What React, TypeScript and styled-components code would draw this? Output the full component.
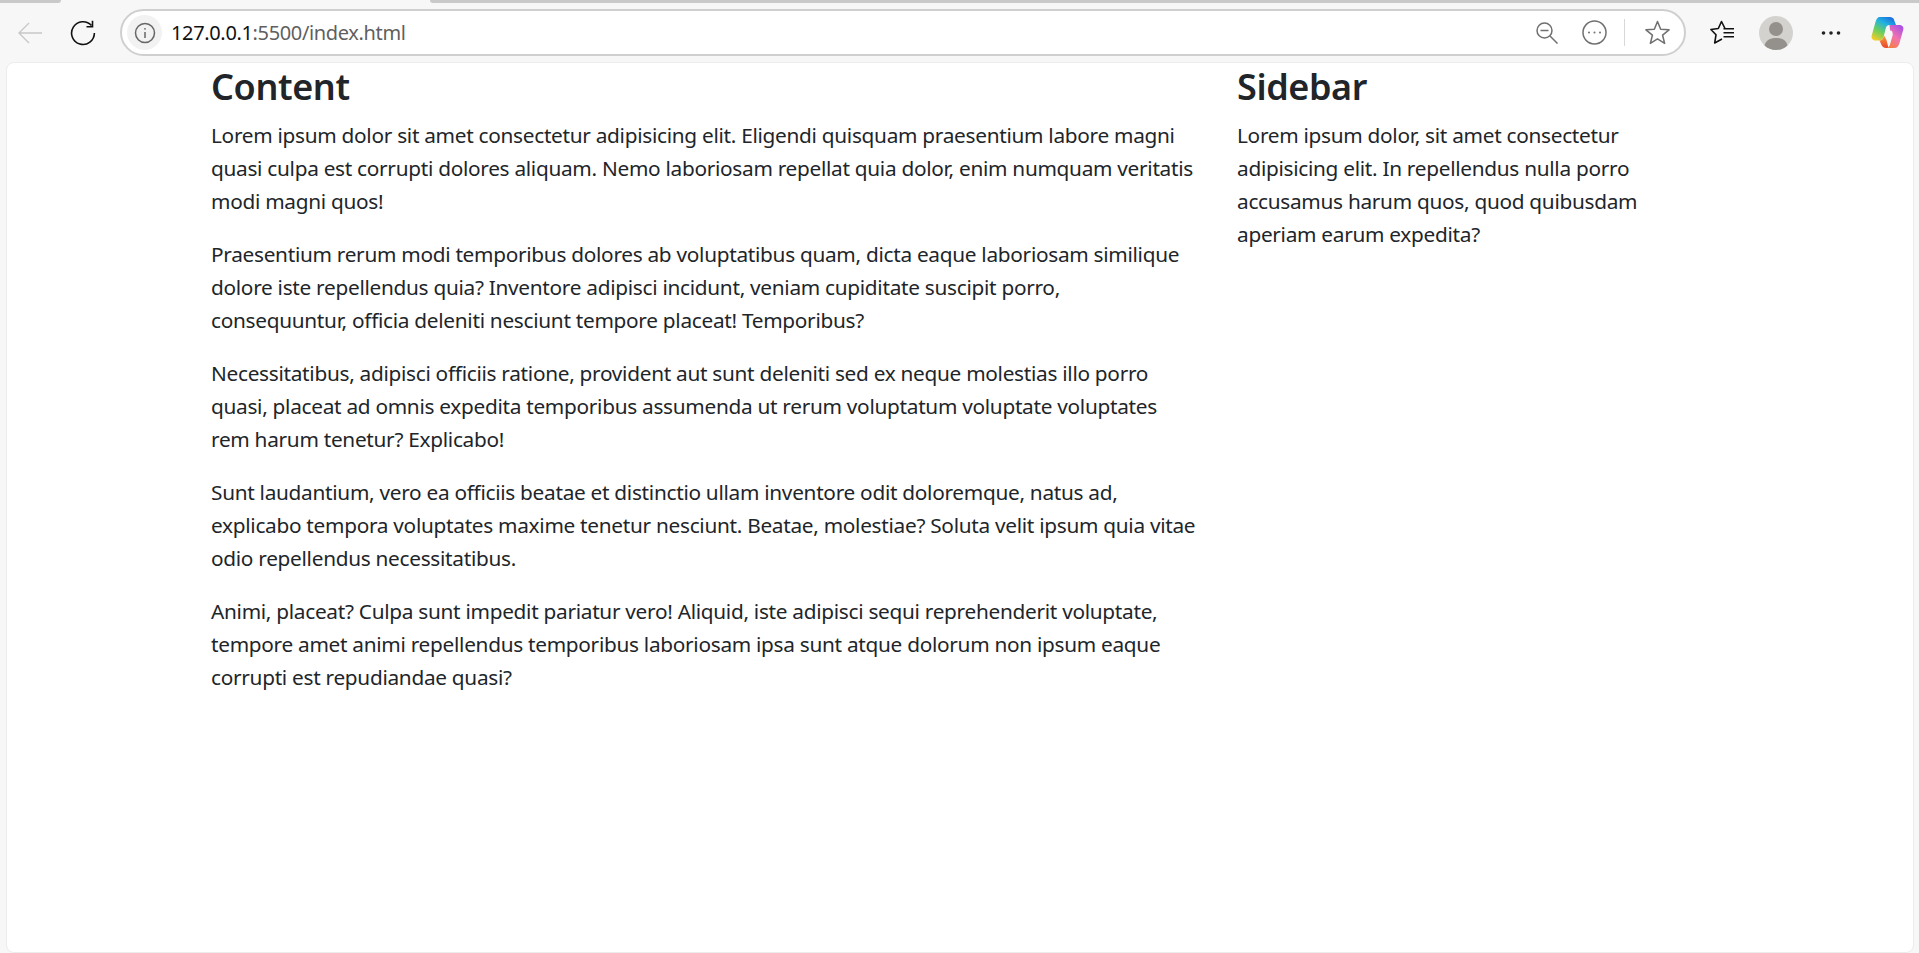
import * as React from 'react'
import styled, { createGlobalStyle } from 'styled-components'

const GlobalStyle = createGlobalStyle`
    html, body {
        margin: 0;
        padding: 0;
        height: 100%;
        background: #f7f7f7;
        overflow: hidden;
    }
    #root {
        height: 100%;
    }
`

const Window = styled.div`
    height: 953px;
    display: flex;
    flex-direction: column;
    background: #f7f7f7;
    font-family: 'Noto Sans', 'Open Sans', sans-serif;
`

const TabEdge = styled.div`
    height: 3px;
    display: flex;
    justify-content: space-between;
    flex: none;
`

const TabPiece = styled.div<{ $width: string; $side: 'left' | 'right' }>`
    width: ${p => p.$width};
    background: #c9c9c9;
    border-radius: ${p => (p.$side === 'left' ? '0 0 4px 0' : '0 0 0 4px')};
`

const Toolbar = styled.div`
    height: 59px;
    flex: none;
    display: flex;
    align-items: center;
    padding: 0 0 0 12px;
    box-sizing: border-box;
`

const NavButton = styled.div`
    width: 36px;
    height: 36px;
    margin-right: 17px;
    display: flex;
    align-items: center;
    justify-content: center;
    flex: none;
`

const Omnibox = styled.div`
    width: 1566px;
    height: 47px;
    margin-left: 2px;
    box-sizing: border-box;
    flex: none;
    display: flex;
    align-items: center;
    background: #fff;
    border: 2px solid #cfcfcf;
    border-radius: 24px;
    padding: 0 14px 0 5px;
`

const InfoBadge = styled.div`
    width: 35px;
    height: 35px;
    border-radius: 50%;
    background: #f2f2f2;
    display: flex;
    align-items: center;
    justify-content: center;
    flex: none;
`

const Url = styled.div`
    margin-left: 9px;
    font-size: 20px;
    letter-spacing: -0.35px;
    color: #5f5f5f;
    flex: 1;
`

const Host = styled.span`
    color: #111;
`

const BoxActions = styled.div`
    display: flex;
    align-items: center;
    gap: 17px;

    & > :first-child {
        margin-right: 7px;
    }

    & > :last-child {
        margin-left: 3px;
    }
`

const Divider = styled.div`
    width: 1px;
    height: 27px;
    background: #d8d8d8;
`

const RightTools = styled.div`
    display: flex;
    align-items: center;
    margin-left: 24px;
    gap: 24px;
`

const MenuButton = styled.div`
    display: flex;
    margin: 0 6px 0 4px;
`

const Page = styled.main`
    flex: 1;
    margin: 0 5px 0 6px;
    background: #fff;
    border-radius: 8px;
    border: 1px solid #ececec;
    box-sizing: border-box;
    padding: 1px 0 0 204px;
    display: grid;
    grid-template-columns: 1026px 410px;
    align-content: start;
    color: #212529;
`

const Column = styled.section`
    padding-right: 20px;
`

const Heading = styled.h3`
    margin: 0 0 9px;
    font-size: 36px;
    line-height: 46px;
    font-weight: 600;
    letter-spacing: -0.4px;
`

const Paragraph = styled.p`
    margin: 0 0 20px;
    font-size: 20.8px;
    line-height: 33px;
    letter-spacing: -0.29px;
`

const Line = styled.span`
    display: block;
    white-space: nowrap;
`

const content = [
    [
        'Lorem ipsum dolor sit amet consectetur adipisicing elit. Eligendi quisquam praesentium labore magni',
        'quasi culpa est corrupti dolores aliquam. Nemo laboriosam repellat quia dolor, enim numquam veritatis',
        'modi magni quos!',
    ],
    [
        'Praesentium rerum modi temporibus dolores ab voluptatibus quam, dicta eaque laboriosam similique',
        'dolore iste repellendus quia? Inventore adipisci incidunt, veniam cupiditate suscipit porro,',
        'consequuntur, officia deleniti nesciunt tempore placeat! Temporibus?',
    ],
    [
        'Necessitatibus, adipisci officiis ratione, provident aut sunt deleniti sed ex neque molestias illo porro',
        'quasi, placeat ad omnis expedita temporibus assumenda ut rerum voluptatum voluptate voluptates',
        'rem harum tenetur? Explicabo!',
    ],
    [
        'Sunt laudantium, vero ea officiis beatae et distinctio ullam inventore odit doloremque, natus ad,',
        'explicabo tempora voluptates maxime tenetur nesciunt. Beatae, molestiae? Soluta velit ipsum quia vitae',
        'odio repellendus necessitatibus.',
    ],
    [
        'Animi, placeat? Culpa sunt impedit pariatur vero! Aliquid, iste adipisci sequi reprehenderit voluptate,',
        'tempore amet animi repellendus temporibus laboriosam ipsa sunt atque dolorum non ipsum eaque',
        'corrupti est repudiandae quasi?',
    ],
]

const sidebar = [
    'Lorem ipsum dolor, sit amet consectetur',
    'adipisicing elit. In repellendus nulla porro',
    'accusamus harum quos, quod quibusdam',
    'aperiam earum expedita?',
]

const TextBlock = ({ lines }: { lines: string[] }) => (
    <Paragraph>
        {lines.map(line => (
            <Line key={line}>{line}</Line>
        ))}
    </Paragraph>
)

const BackIcon = () => (
    <svg width="26" height="26" viewBox="0 0 26 26" fill="none" stroke="#c8c8c8" strokeWidth="1.4">
        <path d="M25 13H2M12 3 2 13l10 10" />
    </svg>
)

const ReloadIcon = () => (
    <svg width="26" height="26" viewBox="0 0 26 26" fill="none" stroke="#111" strokeWidth="1.6">
        <path d="M21.5 5.500A11.400 11.400 0 1 0 24.400 13" />
        <path d="M22.500 .8v6h-6" />
    </svg>
)

const InfoIcon = () => (
    <svg width="22" height="22" viewBox="0 0 22 22" fill="none" stroke="#666" strokeWidth="1.5">
        <circle cx="11" cy="11" r="9.500" />
        <path d="M11 10v6" />
        <path d="M11 6.200v1.400" strokeWidth="1.800" />
    </svg>
)

const ZoomOutIcon = () => (
    <svg width="22" height="22" viewBox="0 0 22 22" fill="none" stroke="#707070" strokeWidth="1.5">
        <circle cx="8.500" cy="8.500" r="7.500" />
        <path d="M4.500 8.500h8M14 14l7.500 7.500" />
    </svg>
)

const MoreCircleIcon = () => (
    <svg width="25" height="25" viewBox="0 0 25 25" fill="none" stroke="#707070" strokeWidth="1.5">
        <circle cx="12.500" cy="12.500" r="11.500" />
        <circle cx="7" cy="12.500" r="1" fill="#707070" stroke="none" />
        <circle cx="12.500" cy="12.500" r="1" fill="#707070" stroke="none" />
        <circle cx="18" cy="12.500" r="1" fill="#707070" stroke="none" />
    </svg>
)

const StarIcon = () => (
    <svg width="25" height="25" viewBox="0 0 26 26" fill="none" stroke="#707070" strokeWidth="1.6" strokeLinejoin="round">
        <path d="M13 1.500 16.300 9.600 25 10.200 18.300 15.800 20.400 24.300 13 19.700 5.600 24.300 7.700 15.800 1 10.200 9.700 9.600Z" />
    </svg>
)

const FavouritesIcon = () => (
    <svg width="25" height="25" viewBox="0 0 25 25" fill="none" stroke="#111" strokeWidth="1.600" strokeLinejoin="round">
        <path d="M15 8.500 11.500 1.500 8.300 8.500 .9 9.500 6 14.800 4.700 23 12 19" />
        <path d="M13.500 8.800h10.500M13.500 12.800h10.500M13.500 16.800h10.500" />
    </svg>
)

const Avatar = () => (
    <svg width="34" height="34" viewBox="0 0 34 34">
        <circle cx="17" cy="17" r="17" fill="#d3d2cf" />
        <circle cx="17" cy="13" r="7" fill="#94918c" />
        <path d="M5.500 29.500C7 24 11 22 17 22s10 2 11.500 7.500A17 17 0 0 1 17 34a17 17 0 0 1-11.500-4.500Z" fill="#94918c" />
    </svg>
)

const DotsIcon = () => (
    <svg width="20" height="6" viewBox="0 0 20 6" fill="#222">
        <circle cx="2.500" cy="3" r="1.800" />
        <circle cx="10" cy="3" r="1.800" />
        <circle cx="17.500" cy="3" r="1.800" />
    </svg>
)

const CopilotIcon = () => (
    <svg width="33" height="31" viewBox="0 0 33 31">
        <defs>
            <linearGradient id="copilotLeft" x1="0.75" y1="0" x2="0.2" y2="1">
                <stop offset="0" stopColor="#1c6fe0" />
                <stop offset="0.3" stopColor="#22b3e0" />
                <stop offset="0.65" stopColor="#6fcf5a" />
                <stop offset="1" stopColor="#f2cc2c" />
            </linearGradient>
            <linearGradient id="copilotRight" x1="0.8" y1="0" x2="0.2" y2="1">
                <stop offset="0" stopColor="#a850e6" />
                <stop offset="0.5" stopColor="#f272b0" />
                <stop offset="1" stopColor="#f6803a" />
            </linearGradient>
            <linearGradient id="copilotTail" x1="0" y1="0" x2="0" y2="1">
                <stop offset="0" stopColor="#f9a13c" />
                <stop offset="1" stopColor="#e8452c" />
            </linearGradient>
        </defs>
        <path d="M9 0h9c1.500 0 3 .2 4.500 1.500L25 8h-6.500c-1.800 0-3 .9-3.500 2.500L12.500 20c-.6 2-2.200 3.500-4 3.500H4.500C1.500 23.500 0 21 .7 18.500L4.500 5C5.300 2 6.500 0 9 0Z" fill="url(#copilotLeft)" />
        <path d="M12.500 17.500 15.500 23l2 8h-2.500c-2 0-3.500-1-4.500-3l-2-4.500h.5c1.800 0 3.100-1.500 3.500-3Z" fill="url(#copilotTail)" />
        <path d="M18.500 8H28c3 0 5 2 4.300 4.500L28.500 26c-.9 3-2.500 5-5 5H15c2 0 3.400-1.500 4-3.500l3-10.500h-.5c.5-2-.5-3.500-2.500-3.500Z" fill="url(#copilotRight)" />
    </svg>
)

const App = () => (
    <Window>
        <GlobalStyle />
        <TabEdge>
            <TabPiece $width="61px" $side="left" />
            <TabPiece $width="1489px" $side="right" />
        </TabEdge>
        <Toolbar>
            <NavButton>
                <BackIcon />
            </NavButton>
            <NavButton>
                <ReloadIcon />
            </NavButton>
            <Omnibox>
                <InfoBadge>
                    <InfoIcon />
                </InfoBadge>
                <Url>
                    <Host>127.0.0.1</Host>:5500/index.html
                </Url>
                <BoxActions>
                    <ZoomOutIcon />
                    <MoreCircleIcon />
                    <Divider />
                    <StarIcon />
                </BoxActions>
            </Omnibox>
            <RightTools>
                <FavouritesIcon />
                <Avatar />
                <MenuButton>
                    <DotsIcon />
                </MenuButton>
                <CopilotIcon />
            </RightTools>
        </Toolbar>
        <Page>
            <Column>
                <Heading>Content</Heading>
                {content.map(lines => (
                    <TextBlock key={lines[0]} lines={lines} />
                ))}
            </Column>
            <Column>
                <Heading>Sidebar</Heading>
                <TextBlock lines={sidebar} />
            </Column>
        </Page>
    </Window>
)

export default App
